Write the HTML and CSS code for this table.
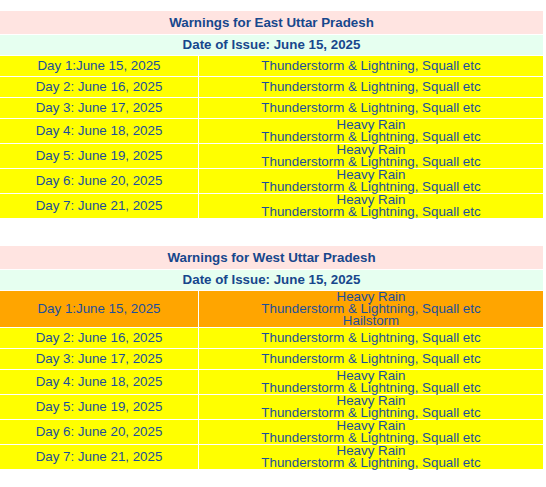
FILE: index.html
```html
<!DOCTYPE html>
<html>
<head>
<meta charset="utf-8">
<link rel="stylesheet" href="styles.css">
</head>
<body>
<div class="page">
  <table class="warn">
    <tr><th colspan="2" class="title">Warnings for East Uttar Pradesh</th></tr>
    <tr><th colspan="2" class="issue">Date of Issue: June 15, 2025</th></tr>
    <tr class="yellow"><td class="day">Day 1:June 15, 2025</td><td class="desc">Thunderstorm &amp; Lightning, Squall etc</td></tr>
    <tr class="yellow"><td class="day">Day 2: June 16, 2025</td><td class="desc">Thunderstorm &amp; Lightning, Squall etc</td></tr>
    <tr class="yellow"><td class="day">Day 3: June 17, 2025</td><td class="desc">Thunderstorm &amp; Lightning, Squall etc</td></tr>
    <tr class="yellow"><td class="day">Day 4: June 18, 2025</td><td class="desc">Heavy Rain<br>Thunderstorm &amp; Lightning, Squall etc</td></tr>
    <tr class="yellow"><td class="day">Day 5: June 19, 2025</td><td class="desc">Heavy Rain<br>Thunderstorm &amp; Lightning, Squall etc</td></tr>
    <tr class="yellow"><td class="day">Day 6: June 20, 2025</td><td class="desc">Heavy Rain<br>Thunderstorm &amp; Lightning, Squall etc</td></tr>
    <tr class="yellow"><td class="day">Day 7: June 21, 2025</td><td class="desc">Heavy Rain<br>Thunderstorm &amp; Lightning, Squall etc</td></tr>
  </table>
  <table class="warn">
    <tr><th colspan="2" class="title">Warnings for West Uttar Pradesh</th></tr>
    <tr><th colspan="2" class="issue">Date of Issue: June 15, 2025</th></tr>
    <tr class="orange"><td class="day">Day 1:June 15, 2025</td><td class="desc">Heavy Rain<br>Thunderstorm &amp; Lightning, Squall etc<br>Hailstorm</td></tr>
    <tr class="yellow"><td class="day">Day 2: June 16, 2025</td><td class="desc">Thunderstorm &amp; Lightning, Squall etc</td></tr>
    <tr class="yellow"><td class="day">Day 3: June 17, 2025</td><td class="desc">Thunderstorm &amp; Lightning, Squall etc</td></tr>
    <tr class="yellow"><td class="day">Day 4: June 18, 2025</td><td class="desc">Heavy Rain<br>Thunderstorm &amp; Lightning, Squall etc</td></tr>
    <tr class="yellow"><td class="day">Day 5: June 19, 2025</td><td class="desc">Heavy Rain<br>Thunderstorm &amp; Lightning, Squall etc</td></tr>
    <tr class="yellow"><td class="day">Day 6: June 20, 2025</td><td class="desc">Heavy Rain<br>Thunderstorm &amp; Lightning, Squall etc</td></tr>
    <tr class="yellow"><td class="day">Day 7: June 21, 2025</td><td class="desc">Heavy Rain<br>Thunderstorm &amp; Lightning, Squall etc</td></tr>
  </table>
</div>
</body>
</html>
```
FILE: styles.css
```css
html, body {
  margin: 0;
  padding: 0;
  background: #ffffff;
}
.page {
  padding-top: 10px;
  font-family: "Liberation Sans", Arial, sans-serif;
  font-size: 13.33px;
}
.warn {
  width: 543px;
  border-collapse: separate;
  border-spacing: 0 1px;
  margin: 0 0 26px 0;
}
.warn th, .warn td {
  padding: 0;
  text-align: center;
  vertical-align: middle;
  line-height: 12px;
}
.title {
  height: 23px;
  background: #ffe4e1;
  color: #17478c;
  font-weight: bold;
}
.issue {
  height: 20px;
  background: #e6fff0;
  color: #17478c;
  font-weight: bold;
}
.day {
  width: 198px;
  height: 20px;
  border-right: 1px solid #ffffff;
  color: #1c4f9c;
}
.desc {
  height: 20px;
  color: #1c4f9c;
}
.yellow td {
  background: #ffff00;
}
.orange td {
  background: #ffa500;
}
```
